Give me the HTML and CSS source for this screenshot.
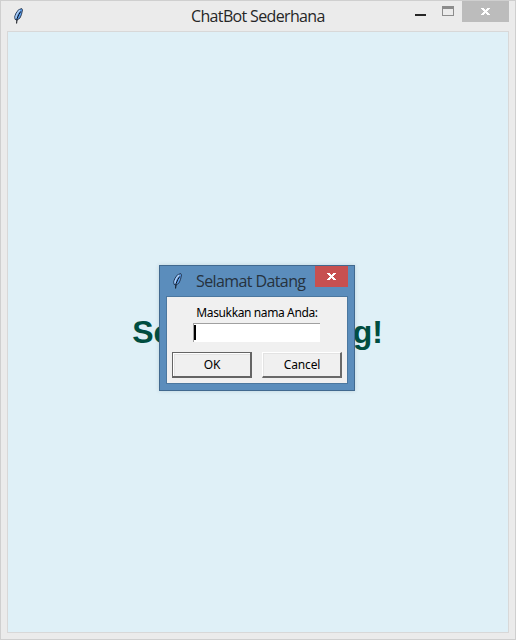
FILE: index.html
```html
<!DOCTYPE html>
<html lang="id">
<head>
<meta charset="utf-8">
<title>ChatBot Sederhana</title>
<link rel="stylesheet" href="styles.css">
</head>
<body>
<svg width="0" height="0" class="defs">
  <symbol id="feather" viewBox="0 0 10 16">
    <path d="M7.7.5 8.5 2 7.5 6.5 6 10 3 12.2 1 11.3.7 8.5 2 5.2 4.5 1.8Z" fill="#5a9be8" stroke="#1b2638" stroke-width=".8"/>
    <path d="M2 10.5 2.2 8 3.8 4.5 6 2" fill="none" stroke="#b9d3f2" stroke-width="1.2"/>
    <path d="M6.7 3.5 4.8 6.5 3.1 10.5 2.6 15.5" fill="none" stroke="#0a0d14" stroke-width="1"/>
  </symbol>
  <symbol id="cross" viewBox="0 0 9 7">
    <path d="M0 0H3V1H4V2H5V1H6V0H9V1H8V2H7V3H6V4H7V5H8V6H9V7H6V6H5V5H4V6H3V7H0V6H1V5H2V4H3V3H2V2H1V1H0Z" fill="#fff"/>
  </symbol>
</svg>
<div class="window">
  <header class="titlebar">
    <svg class="feather"><use href="#feather"/></svg>
    <h1 class="title">ChatBot Sederhana</h1>
    <div class="controls">
      <span class="minimize"></span>
      <span class="maximize"></span>
      <span class="close"><svg class="cross"><use href="#cross"/></svg></span>
    </div>
  </header>
  <main class="client"><p class="welcome">Selamat Datang!</p></main>
  <section class="dialog">
    <header class="dialog-bar">
      <svg class="feather"><use href="#feather"/></svg>
      <h2 class="dialog-title">Selamat Datang</h2>
      <span class="dialog-close"><svg class="cross"><use href="#cross"/></svg></span>
    </header>
    <div class="dialog-body">
      <label class="prompt">Masukkan nama Anda:</label>
      <div class="entry"><span class="caret"></span></div>
      <div class="actions">
        <div class="button default"><span>OK</span></div>
        <div class="button"><span>Cancel</span></div>
      </div>
    </div>
  </section>
</div>
</body>
</html>
```
FILE: styles.css
```css
* { box-sizing: border-box; }
body { margin: 0; }
.defs { display: block; }
.window {
  position: relative;
  display: flex;
  flex-direction: column;
  width: 516px;
  height: 640px;
  padding: 0 6px 6px;
  border: 1px solid #cfcfcf;
  background: #ebebeb;
  overflow: hidden;
}
.titlebar { display: flex; height: 30px; }
.feather { display: block; width: 10px; height: 16px; margin: 7px 0 0 7px; flex: none; }
.title {
  flex: none;
  width: 134px;
  margin: 0 0 0 167px;
  font: 400 16px/30px "Open Sans", sans-serif;
  letter-spacing: -0.65px;
  color: #262626;
  white-space: nowrap;
}
.controls { display: flex; margin-left: 90px; }
.minimize { width: 11px; height: 2px; margin-top: 13px; background: #262626; }
.maximize { width: 12px; height: 10px; margin: 5px 0 0 16px; border: 1px solid #8c8c8c; border-top-width: 3px; }
.close { display: flex; width: 47px; height: 21px; margin-left: 8px; padding: 7px 0 0 19px; background: #bcbcbc; }
.cross { display: block; width: 9px; height: 7px; }
.client {
  flex: 1;
  display: flex;
  align-items: center;
  justify-content: center;
  width: 502px;
  border: 1px solid #d8d8d8;
  background: #dff0f7;
}
.welcome {
  margin: 0 1px 0 0;
  font: bold 32px/36px "Liberation Sans", Arial, sans-serif;
  color: #004d40;
}
.dialog {
  position: absolute;
  left: 158px;
  top: 264px;
  display: flex;
  flex-direction: column;
  width: 196px;
  height: 126px;
  padding: 0 6px 6px;
  border: 1px solid #41698f;
  background: #5b8dbc;
  box-shadow: 0 0 4px rgba(60, 90, 110, 0.2);
}
.dialog-bar { display: flex; height: 30px; }
.dialog-title {
  flex: none;
  width: 110px;
  margin: 0 0 0 13px;
  font: 400 16px/31px "Open Sans", sans-serif;
  letter-spacing: -0.6px;
  color: #26323e;
  white-space: nowrap;
}
.dialog-close { display: flex; width: 33px; height: 21px; margin-left: 9px; padding: 7px 0 0 12px; background: #c75050; }
.dialog-body {
  flex: 1;
  display: flex;
  flex-direction: column;
  align-items: center;
  padding-top: 7px;
  border: 1px solid #4b779f;
  background: #f0f0f0;
}
.prompt {
  font: 12px/18px "Noto Sans", sans-serif;
  letter-spacing: -0.38px;
  color: #000;
  white-space: nowrap;
}
.entry {
  width: 127px;
  height: 19px;
  margin: 1px 1px 0 0;
  padding: 1px 0 0;
  border: solid #a0a0a0;
  border-width: 1px 0 0 1px;
  background: #fff;
}
.caret { display: block; width: 2px; height: 15px; background: #000; }
.actions { display: flex; gap: 10px; margin-top: 10px; }
.button {
  width: 80px;
  height: 26px;
  padding-left: 1px;
  border: solid;
  border-width: 1px 2px 2px 1px;
  border-color: #fff #696969 #696969 #fff;
  box-shadow: inset 1px 1px #e3e3e3;
  background: #f0f0f0;
  font: 12px/23px "Noto Sans", sans-serif;
  letter-spacing: -0.15px;
  text-align: center;
}
.default {
  border-color: #646464;
  box-shadow: inset 1px 1px #fff, inset 2px 2px #e3e3e3;
}
```
